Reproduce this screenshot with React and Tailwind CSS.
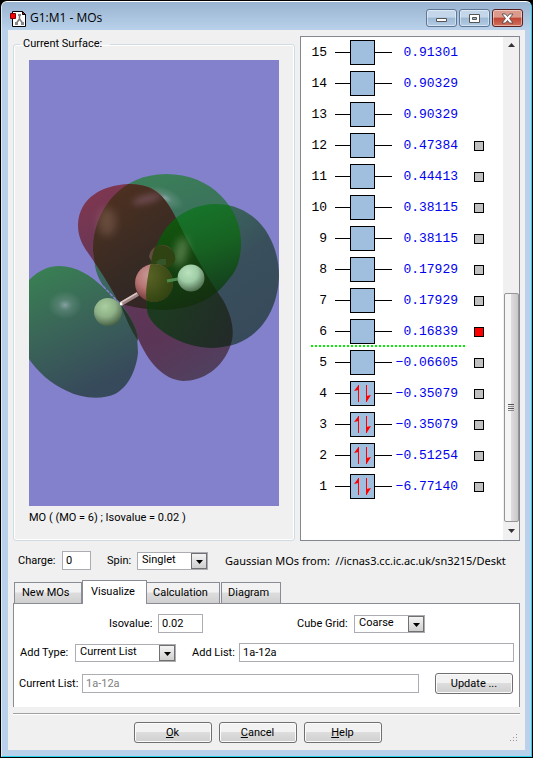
import React from "react";

const levels = [
  { n: 15, e: "0.91301" },
  { n: 14, e: "0.90329" },
  { n: 13, e: "0.90329" },
  { n: 12, e: "0.47384", mark: true },
  { n: 11, e: "0.44413", mark: true },
  { n: 10, e: "0.38115", mark: true },
  { n: 9, e: "0.38115", mark: true },
  { n: 8, e: "0.17929", mark: true },
  { n: 7, e: "0.17929", mark: true },
  { n: 6, e: "0.16839", mark: true, selected: true },
  { n: 5, e: "\u22120.06605", mark: true },
  { n: 4, e: "\u22120.35079", mark: true, filled: true },
  { n: 3, e: "\u22120.35079", mark: true, filled: true },
  { n: 2, e: "\u22120.51254", mark: true, filled: true },
  { n: 1, e: "\u22126.77140", mark: true, filled: true },
];

function AppIcon() {
  return (
    <svg width="16" height="17" viewBox="0 0 16 17" aria-hidden="true">
      <path d="M2.500 1.500h10l3 3v12h-13z" fill="#fff" stroke="#000" />
      <path d="M12.500 1.500v3h3z" fill="#e00" stroke="#000" />
      <path d="M9.500 5v5M9.500 9l-3 4M9.500 9l3 4" stroke="#777" strokeWidth="1.500" fill="none" />
      <path d="M8 4h3v2H8zM5 12h3v3H5zM11 12h3v3h-3z" fill="#888" />
      <path d="M.5 3.500h5v5h-5z" fill="#f00" stroke="#700" />
    </svg>
  );
}

function CaptionButton({ label, close, children }) {
  return (
    <button
      aria-label={label}
      className={
        "flex h-[18px] w-[31px] items-center justify-center rounded-[3px] border shadow-[inset_0_0_0_1px_rgba(255,255,255,0.45)] " +
        (close
          ? "border-[#5a1f1f] bg-linear-to-b from-[#dc9a8c] from-45% via-[#c04433] via-50% to-[#d0705c]"
          : "border-[#5d7794] bg-linear-to-b from-[#c3d6ea] from-45% via-[#9db8d4] via-50% to-[#b4cde6]")
      }
    >
      <svg width="13" height="11" viewBox="0 0 13 11" aria-hidden="true">
        {children}
      </svg>
    </button>
  );
}

function Molecule() {
  const lobeB =
    "M49 165C50 137 74 125 100 124C127 124 137 138 147 158C163 192 180 220 194 240C205 260 205 275 202 284C194 309 173 321 154 321C127 319 113 288 108 276L90 243C79 222 69 207 57 190C52 182 49 175 49 165Z";
  const lobeC =
    "M64 190C64 150 92 114 137 114C183 114 212 148 212 183C212 203 205 214 200 219C185 240 161 250 133 250C112 249 98 246 90 243C77 232 68 219 66 206Z";
  const lobeD =
    "M117 235C118 208 127 180 140 165C151 152 168 144 188 144C228 145 250 180 250 216C249 252 228 288 182 288C150 287 119 266 118 250Z";
  const lobeA =
    "M0 220C10 210 20 206 30 206C48 206 62 216 74 227L92 243C101 256 107 266 108 275L109 293C107 312 98 328 86 334C70 341 50 337 38 331C22 324 8 311 0 299Z";
  return (
    <svg
      role="img"
      aria-label="Molecular orbital surface"
      className="mt-2 block h-[446px] w-full bg-[#8380cc]"
      viewBox="0 0 250 446"
      preserveAspectRatio="xMidYMid slice"
    >
      <defs>
        <linearGradient id="ga" x1="0" y1="0" x2="0.4" y2="1">
          <stop offset="0" stopColor="#398353" />
          <stop offset="0.5" stopColor="#3a6558" />
          <stop offset="1" stopColor="#374a5b" />
        </linearGradient>
        <linearGradient id="gb" gradientUnits="userSpaceOnUse" x1="70" y1="125" x2="170" y2="320">
          <stop offset="0" stopColor="#80364f" />
          <stop offset="0.35" stopColor="#623858" />
          <stop offset="0.75" stopColor="#5b3556" />
          <stop offset="1" stopColor="#50405f" />
        </linearGradient>
        <linearGradient id="gc" x1="0.3" y1="0" x2="0.6" y2="1">
          <stop offset="0" stopColor="#3b8058" />
          <stop offset="1" stopColor="#3b5a62" />
        </linearGradient>
        <linearGradient id="gd" x1="0" y1="0" x2="0.7" y2="1">
          <stop offset="0" stopColor="#3b7a5c" />
          <stop offset="0.6" stopColor="#394f5c" />
          <stop offset="1" stopColor="#374a5b" />
        </linearGradient>
        <linearGradient id="gbc" x1="0" y1="0" x2="0.5" y2="1">
          <stop offset="0" stopColor="#55321f" />
          <stop offset="0.5" stopColor="#352a24" />
          <stop offset="1" stopColor="#2f1c24" />
        </linearGradient>
        <linearGradient id="gcd" gradientUnits="userSpaceOnUse" x1="165" y1="145" x2="195" y2="235">
          <stop offset="0" stopColor="#17752a" />
          <stop offset="0.45" stopColor="#176322" />
          <stop offset="1" stopColor="#143b1c" />
        </linearGradient>
        <linearGradient id="gbd" gradientUnits="userSpaceOnUse" x1="130" y1="250" x2="190" y2="285">
          <stop offset="0" stopColor="#1d3a20" />
          <stop offset="1" stopColor="#222b28" />
        </linearGradient>
        <linearGradient id="gbcd" gradientUnits="userSpaceOnUse" x1="130" y1="165" x2="165" y2="250">
          <stop offset="0" stopColor="#12560d" />
          <stop offset="1" stopColor="#142d10" />
        </linearGradient>
        <radialGradient id="shine">
          <stop offset="0" stopColor="#b0bccc" stopOpacity="0.65" />
          <stop offset="0.4" stopColor="#90aaa8" stopOpacity="0.3" />
          <stop offset="1" stopColor="#90aaa8" stopOpacity="0" />
        </radialGradient>
        <radialGradient id="atom" cx="0.4" cy="0.3" r="0.7">
          <stop offset="0" stopColor="#b9e2bd" />
          <stop offset="0.5" stopColor="#9fcca5" />
          <stop offset="1" stopColor="#506f51" />
        </radialGradient>
        <radialGradient id="atomLeft" cx="0.4" cy="0.3" r="0.75">
          <stop offset="0" stopColor="#a9ce9f" />
          <stop offset="0.5" stopColor="#8fb087" />
          <stop offset="1" stopColor="#3f5840" />
        </radialGradient>
        <radialGradient id="boron" cx="0.38" cy="0.3" r="0.7">
          <stop offset="0" stopColor="#c79c99" />
          <stop offset="0.5" stopColor="#b77573" />
          <stop offset="1" stopColor="#6e3434" />
        </radialGradient>
        <radialGradient id="boronIn" cx="0.3" cy="0.3" r="0.8">
          <stop offset="0" stopColor="#5d6526" />
          <stop offset="1" stopColor="#2f4210" />
        </radialGradient>
        <clipPath id="cb"><path d={lobeB} /></clipPath>
        <clipPath id="cc"><path d={lobeC} /></clipPath>
        <clipPath id="cd"><path d={lobeD} /></clipPath>
      </defs>
      <path d={lobeC} fill="url(#gc)" />
      <path d={lobeD} fill="url(#gd)" />
      <path d={lobeB} fill="url(#gb)" />
      <ellipse cx="136" cy="138" rx="20" ry="10" fill="url(#shine)" transform="rotate(25 136 138)" />
      <path d={lobeB} fill="url(#gbc)" clipPath="url(#cc)" />
      <path d={lobeC} fill="url(#gcd)" clipPath="url(#cd)" />
      <path d={lobeD} fill="url(#gbd)" clipPath="url(#cb)" />
      <g clipPath="url(#cb)">
        <g clipPath="url(#cc)">
          <path d={lobeD} fill="url(#gbcd)" />
        </g>
      </g>
      <path d={lobeA} fill="url(#ga)" />
      <path d="M92 245C103 258 109 272 109 281C102 270 96 257 92 245Z" fill="#27352b" />
      <ellipse cx="36" cy="245" rx="17" ry="14" fill="url(#shine)" />
      <ellipse cx="78" cy="162" rx="9" ry="14" fill="#b38d79" opacity="0.3" filter="blur(4px)" />
      <ellipse cx="118" cy="139" rx="15" ry="4" fill="#8f6478" opacity="0.55" filter="blur(3px)" transform="rotate(-15 118 139)" />
      <ellipse cx="152" cy="192" rx="6" ry="15" fill="#7f9d6c" opacity="0.6" filter="blur(4px)" transform="rotate(12 152 192)" />
      <path d="M74 226L90 243" stroke="#7f80ca" strokeWidth="1.500" strokeDasharray="4 1" />
      <path d="M120 197A13 13 0 0 1 143 190Q130 190 124 204Z" fill="#624d40" />
      <path d="M126 187Q135 182 144 191Q150 202 140 207Q129 210 122 204Q123 194 126 187Z" fill="#2e4311" />
      <path d="M127 202l4-3h6v6h-8z" fill="#355528" />
      <circle cx="125" cy="223" r="19" fill="url(#boron)" />
      <g clipPath="url(#cd)">
        <circle cx="125" cy="223" r="19" fill="url(#boronIn)" />
      </g>
      <path d="M92 244L109 234" stroke="#9f8585" strokeWidth="4" />
      <path d="M91 243L108 233" stroke="#d9c5c2" strokeWidth="1.500" />
      <path d="M138 221L149 219" stroke="#4d8b4d" strokeWidth="3" />
      <circle cx="92" cy="244" r="1.500" fill="#fff" />
      <circle cx="162" cy="218" r="13.500" fill="url(#atom)" />
      <circle cx="79" cy="252" r="14" fill="url(#atomLeft)" />
    </svg>
  );
}

function Orbital({ level }) {
  return (
    <li className="flex h-[31px] items-center font-['Liberation_Mono',monospace] text-[13px] leading-4">
      <span className="w-[26px] text-right">{level.n}</span>
      <span className="ml-2 h-px w-[15px] bg-black" />
      <span className="flex size-[25px] items-center justify-center border border-black bg-[#a0bede]">
        {level.filled && (
          <svg width="19" height="19" viewBox="0 0 19 19" aria-hidden="true">
            <path d="M5 1h1v17H5zM13 1h1v17h-1z" fill="#f00" />
            <path d="M5.500 1v5L1 7zM13.500 18v-6l4.500-1z" fill="#f00" />
          </svg>
        )}
      </span>
      <span className="h-px w-[17px] bg-black" />
      <span className="w-[66px] text-right text-[#0000f0]">{level.e}</span>
      {level.mark && (
        <button
          aria-label={"Orbital " + level.n}
          className={"ml-4 size-[10px] border border-black " + (level.selected ? "bg-[#f00]" : "bg-[#c0c0c0]")}
        />
      )}
    </li>
  );
}

function Arrow({ up }) {
  return (
    <svg width="7" height="4" viewBox="0 0 7 4" aria-hidden="true">
      <path d={up ? "M0 4L3.500 0L7 4z" : "M0 0h7L3.500 4z"} fill="#333" />
    </svg>
  );
}

function Scrollbar() {
  return (
    <div className="flex w-4 flex-col items-center bg-[#f0f0f0]">
      <button aria-label="Scroll up" className="flex h-4 w-full items-center justify-center"><Arrow up /></button>
      <div className="flex-1" />
      <div className="flex h-[229px] w-[15px] flex-col items-center justify-center gap-px rounded-[2px] border border-[#959595] bg-linear-to-r from-[#f5f5f5] from-45% via-[#dcdcdc] via-50% to-[#c8c8cc]">
        <span className="h-px w-[6px] bg-[#555]" />
        <span className="h-px w-[6px] bg-[#888]" />
        <span className="h-px w-[6px] bg-[#555]" />
        <span className="h-px w-[6px] bg-[#888]" />
      </div>
      <button aria-label="Scroll down" className="flex h-[18px] w-full items-center justify-center"><Arrow /></button>
    </div>
  );
}

function Select({ id, value, width }) {
  return (
    <span className={"relative inline-flex h-[18px] border border-[#abadb3] bg-white " + width}>
      <select id={id} defaultValue={value} className="w-full appearance-none bg-transparent pb-0.5 pl-1 outline-none">
        <option>{value}</option>
      </select>
      <span className="pointer-events-none absolute inset-y-0 right-0 flex w-4 items-center justify-center border border-[#707070] bg-linear-to-b from-[#f4f4f4] to-[#cfcfcf] pt-0.5">
        <svg width="7" height="4" viewBox="0 0 7 4" aria-hidden="true"><path d="M0 0h7L3.500 4z" fill="#000" /></svg>
      </span>
    </span>
  );
}

function Button({ children }) {
  return (
    <button className="h-[21px] w-[78px] rounded-[3px] border border-[#707070] bg-linear-to-b from-[#f2f2f2] from-45% via-[#dddddd] via-50% to-[#cfcfcf] shadow-[inset_0_0_0_1px_#fbfbfb]">
      {children}
    </button>
  );
}

const inputBox = "h-[19px] border border-[#abadb3] bg-white px-[3px] outline-none";
const tab = "h-[21px] border border-b-0 border-[#898c95] bg-linear-to-b from-[#f2f2f2] from-45% via-[#dddddd] via-50% to-[#cfcfcf] text-left";

export default function App() {
  return (
    <div className="flex min-h-screen flex-col bg-black p-px font-['Roboto','Liberation_Sans',sans-serif] text-[11px] leading-[14px] text-black">
      <div className="flex flex-1 flex-col rounded-t-[6px] border border-t-white border-r-[#37c8e8] border-b-[#28d3ee] border-l-[#dcebf8] bg-[#b9d1ea] px-[6px] pb-[6px]">
        <header className="-mx-[6px] flex h-7 items-center rounded-t-[5px] bg-linear-to-b from-[#99b4d1] to-[#b9d1ea] pt-1 pr-2 pl-2">
          <AppIcon />
          <h1 className="ml-1 flex-1 font-['Open_Sans',sans-serif] text-[12px] leading-4">G1:M1 - MOs</h1>
          <div className="flex gap-[2px]">
            <CaptionButton label="Minimize">
              <path d="M1.500 5.500h10v3h-10z" fill="#fff" stroke="#555" />
            </CaptionButton>
            <CaptionButton label="Maximize">
              <path d="M1.500 1.500h10v8h-10z" fill="#fff" stroke="#555" />
              <path d="M4.500 4.500h4v2h-4z" fill="#9db8d4" stroke="#555" />
            </CaptionButton>
            <CaptionButton label="Close" close>
              <path d="M1 1h3.500l2 2.500L8.500 1H12L8.500 5.500L12 10H8.500l-2-2.500L4.500 10H1l3.500-4.500z" fill="#fff" stroke="#444" strokeWidth="0.800" />
            </CaptionButton>
          </div>
        </header>

        <main className="flex flex-1 flex-col bg-[#f0f0f0] px-[5px] pt-[6px]">
          <section className="flex gap-[5px]">
            <fieldset className="min-w-0 flex-1 rounded-[3px] border border-[#d0dce4] px-[15px] shadow-[inset_0_0_0_1px_#fff]">
              <legend className="-ml-[9px] pr-2 pl-[3px] leading-4">Current Surface:</legend>
              <Molecule />
              <p className="mt-[5px]">MO ( (MO = 6) ; Isovalue = 0.02 )</p>
            </fieldset>
            <div className="flex h-[505px] w-[220px] border border-[#828790] bg-white">
              <ol className="flex-1">
                {levels.map((l) => (
                  <React.Fragment key={l.n}>
                    <Orbital level={l} />
                    {l.n === 6 && (
                      <li aria-hidden="true" className="-mt-0.5 mr-[38px] ml-[10px] h-0.5 bg-[repeating-linear-gradient(90deg,#00f000_0_2px,transparent_2px_4px)]" />
                    )}
                  </React.Fragment>
                ))}
              </ol>
              <Scrollbar />
            </div>
          </section>

          <section className="mt-[10px] flex items-center pl-[5px]">
            <label htmlFor="charge" className="w-11">Charge:</label>
            <input id="charge" defaultValue="0" className={inputBox + " w-[29px]"} />
            <label htmlFor="spin" className="ml-4 w-[30px]">Spin:</label>
            <Select id="spin" value="Singlet" width="w-[71px]" />
            <p className="ml-[17px] flex-1 overflow-hidden font-['Noto_Sans',sans-serif] text-[11px] whitespace-pre">
              {"Gaussian MOs from:  //icnas3.cc.ic.ac.uk/sn3215/Deskt"}
            </p>
          </section>

          <section className="mt-[10px]">
            <div role="tablist" className="flex items-end pl-px">
              <button role="tab" aria-selected="false" className={tab + " w-[68px] pl-[7px]"}>New MOs</button>
              <button role="tab" aria-selected="true" className="relative -mb-px h-6 w-[65px] border border-b-0 border-[#898c95] bg-white pb-0.5 pl-2 text-left">Visualize</button>
              <button role="tab" aria-selected="false" className={tab + " w-[73px] border-l-0 pl-[6px]"}>Calculation</button>
              <button role="tab" aria-selected="false" className={tab + " ml-px w-[60px] pl-[6px]"}>Diagram</button>
            </div>
            <div role="tabpanel" className="h-[104px] border border-b-0 border-[#898c95] bg-white px-[5px] pt-[10px]">
              <div className="flex items-center pr-[89px] pl-[90px]">
                <label htmlFor="iso" className="w-[49px]">Isovalue:</label>
                <input id="iso" defaultValue="0.02" className={inputBox + " w-[45px]"} />
                <span className="flex-1" />
                <label htmlFor="grid" className="w-[57px]">Cube Grid:</label>
                <Select id="grid" value="Coarse" width="w-[71px]" />
              </div>
              <div className="mt-[10px] flex items-center pl-px">
                <label htmlFor="type" className="w-[55px]">Add Type:</label>
                <Select id="type" value="Current List" width="w-[101px]" />
                <label htmlFor="list" className="ml-4 w-[47px]">Add List:</label>
                <input id="list" defaultValue="1a-12a" className={inputBox + " min-w-0 flex-1"} />
              </div>
              <div className="mt-[11px] flex items-center pr-px">
                <label htmlFor="current" className="w-[63px]">Current List:</label>
                <input id="current" readOnly value="1a-12a" className={inputBox + " mr-4 min-w-0 flex-1 text-[#808080]"} />
                <Button>Update ...</Button>
              </div>
            </div>
          </section>

          <footer className="relative mt-[6px] flex flex-1 justify-center gap-[7px] border-t border-[#a0a0a0] pt-2 pr-[18px] pb-[6px] shadow-[inset_0_1px_0_#fff]">
            <Button><u>O</u>k</Button>
            <Button><u>C</u>ancel</Button>
            <Button><u>H</u>elp</Button>
            <svg className="absolute right-0.5 bottom-2" width="8" height="8" viewBox="0 0 8 8" aria-hidden="true">
              <path d="M6 0h1v1H6zM3 3h1v1H3zM6 3h1v1H6zM0 6h1v1H0zM3 6h1v1H3zM6 6h1v1H6z" fill="#999" />
            </svg>
          </footer>
        </main>
      </div>
    </div>
  );
}
